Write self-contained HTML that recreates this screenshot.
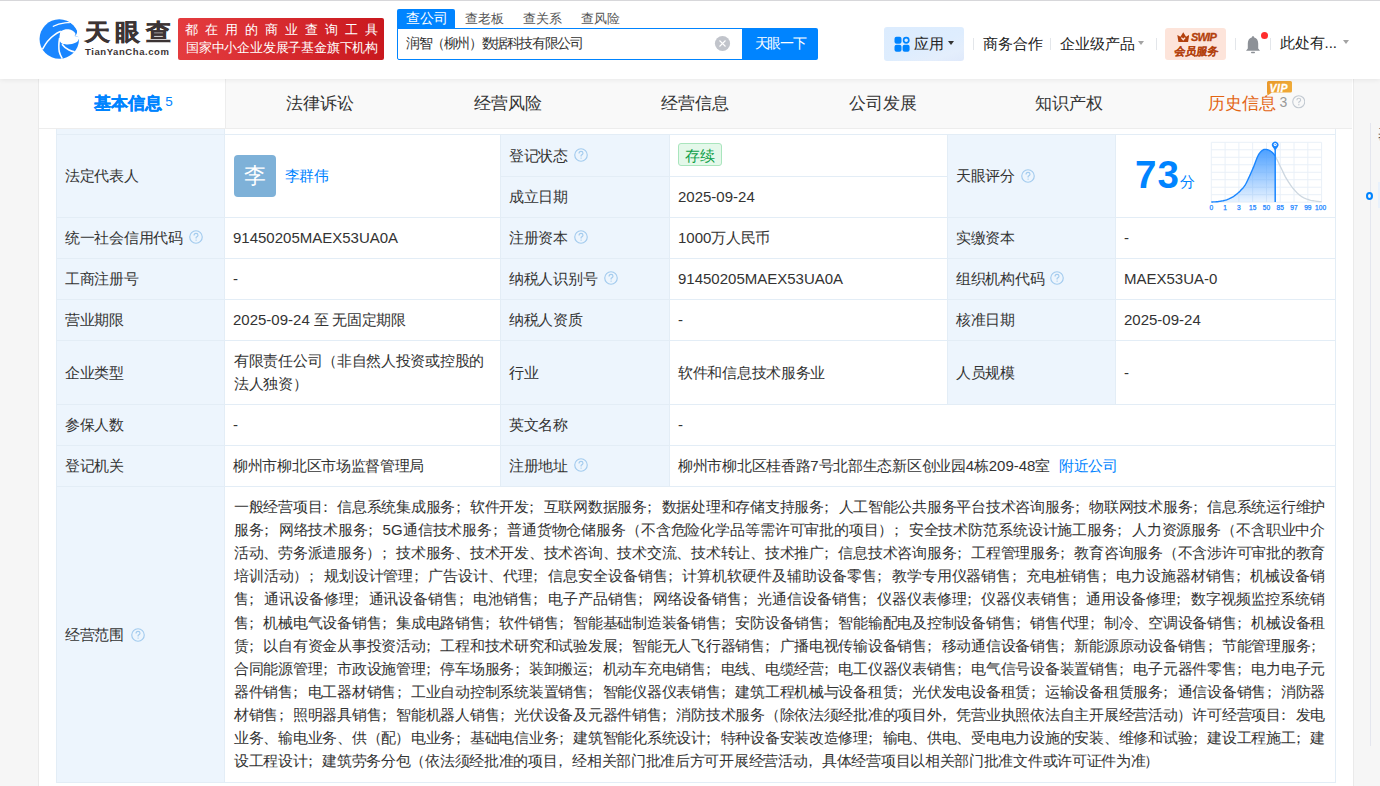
<!DOCTYPE html>
<html><head><meta charset="utf-8">
<style>
*{box-sizing:border-box;margin:0;padding:0}
html,body{width:1380px;height:786px;overflow:hidden;background:#f6f6f6;font-family:"Liberation Sans",sans-serif;color:#333;}
.a{position:absolute;white-space:nowrap}
#hdr{position:absolute;left:0;top:0;width:1380px;height:79px;background:#fff;border-top:1px solid #d7d7da;box-shadow:0 1px 5px rgba(0,0,0,0.07)}
.sep{position:absolute;width:1px;height:12px;background:#e3e6ea;top:37px}
.car{position:absolute;width:0;height:0;border-left:4px solid transparent;border-right:4px solid transparent;border-top:5px solid #333}
.q{position:absolute;width:13px;height:13px;border:1px solid #a9c9e9;border-radius:50%;color:#a9c9e9;font-size:9px;line-height:11px;text-align:center;font-weight:bold}
#panel{position:absolute;left:38px;top:79px;width:1315px;height:707px;background:#fff;border-left:1px solid #e8e8e8;border-right:1px solid #e8e8e8}
#tabs{position:absolute;left:39px;top:79px;width:1313px;height:50px;background:#f9f9f9;border-bottom:1px solid #eeeeee}
.tab{position:absolute;top:0;height:49px;font-size:17px;line-height:49px;color:#333;text-align:center}
.c{position:absolute;background:#fff}
.lb{background:#eef5fc}
.t{position:absolute;font-size:15px;letter-spacing:-0.3px;line-height:20px;color:#333;white-space:nowrap}
.scope div{white-space:nowrap;text-align:justify;text-align-last:justify;height:23px;line-height:23px}
.l{letter-spacing:0}
.pl{position:relative;left:-4.5px}
.pr{position:relative;left:-1px}
</style></head><body>
<div class="a" style="left:38px;top:79px;width:1316px;height:707px;background:#fff;border-left:1px solid #eaeaea;border-right:1px solid #eaeaea"></div>
<div class="a" style="left:56px;top:128px;width:168px;height:654px;background:#edf5fd"></div>
<div class="a" style="left:500px;top:134px;width:169px;height:352px;background:#edf5fd"></div>
<div class="a" style="left:947px;top:134px;width:168px;height:270px;background:#edf5fd"></div>
<div class="a" style="left:56px;top:134px;width:1280px;height:1px;background:#e3edf6"></div>
<div class="a" style="left:56px;top:217px;width:1280px;height:1px;background:#e3edf6"></div>
<div class="a" style="left:56px;top:258px;width:1280px;height:1px;background:#e3edf6"></div>
<div class="a" style="left:56px;top:299px;width:1280px;height:1px;background:#e3edf6"></div>
<div class="a" style="left:56px;top:340px;width:1280px;height:1px;background:#e3edf6"></div>
<div class="a" style="left:56px;top:404px;width:1280px;height:1px;background:#e3edf6"></div>
<div class="a" style="left:56px;top:445px;width:1280px;height:1px;background:#e3edf6"></div>
<div class="a" style="left:56px;top:486px;width:1280px;height:1px;background:#e3edf6"></div>
<div class="a" style="left:56px;top:782px;width:1280px;height:1px;background:#e3edf6"></div>
<div class="a" style="left:500px;top:176px;width:448px;height:1px;background:#e3edf6"></div>
<div class="a" style="left:56px;top:128px;width:1px;height:655px;background:#e3edf6"></div>
<div class="a" style="left:1335px;top:128px;width:1px;height:655px;background:#e3edf6"></div>
<div class="a" style="left:224px;top:128px;width:1px;height:655px;background:#e3edf6"></div>
<div class="a" style="left:500px;top:134px;width:1px;height:353px;background:#e3edf6"></div>
<div class="a" style="left:669px;top:134px;width:1px;height:353px;background:#e3edf6"></div>
<div class="a" style="left:947px;top:134px;width:1px;height:271px;background:#e3edf6"></div>
<div class="a" style="left:1115px;top:134px;width:1px;height:271px;background:#e3edf6"></div>
<div class="t" style="left:65px;top:166.0px;">法定代表人</div>
<div class="a" style="left:234px;top:155px;width:42px;height:42px;border-radius:4px;background:#7eb1d8;color:#fff;font-size:22px;line-height:42px;text-align:center">李</div>
<div class="t" style="left:284.6px;top:165.6px;color:#0084ff">李群伟</div>
<div class="t" style="left:509px;top:145.5px;">登记状态</div>
<svg class="a" style="left:574.0px;top:147.9px" width="14" height="14" viewBox="0 0 14 14"><circle cx="7" cy="7" r="6.25" fill="none" stroke="#a3cbee" stroke-width="1.15"/><path d="M5.05 5.4 C5.05 4.1 6 3.4 7.05 3.4 C8.2 3.4 9 4.15 9 5.2 C9 6.45 7.45 6.7 7.1 7.55 L7.1 8.5" fill="none" stroke="#a3cbee" stroke-width="1.15"/><circle cx="7.1" cy="10.1" r="0.7" fill="#a3cbee"/></svg>
<div class="a" style="left:678px;top:143px;width:44px;height:23px;border:1px solid #a9e5bd;border-radius:3px;background:#e4f8ea;color:#0d9e47;font-size:15px;line-height:24px;text-align:center;letter-spacing:-0.5px;text-indent:-0.5px">存续</div>
<div class="t" style="left:509px;top:187.0px;">成立日期</div>
<div class="t" style="left:678px;top:187.0px;"><span class="l">2025-09-24</span></div>
<div class="t" style="left:956px;top:166.0px;">天眼评分</div>
<svg class="a" style="left:1020.8px;top:168.8px" width="14" height="14" viewBox="0 0 14 14"><circle cx="7" cy="7" r="6.25" fill="none" stroke="#a3cbee" stroke-width="1.15"/><path d="M5.05 5.4 C5.05 4.1 6 3.4 7.05 3.4 C8.2 3.4 9 4.15 9 5.2 C9 6.45 7.45 6.7 7.1 7.55 L7.1 8.5" fill="none" stroke="#a3cbee" stroke-width="1.15"/><circle cx="7.1" cy="10.1" r="0.7" fill="#a3cbee"/></svg>
<div class="a" id="s73" style="left:1135px;top:152.5px;font-size:38.5px;line-height:44px;font-weight:bold;color:#0084ff;letter-spacing:1.2px">73</div>
<div class="a" id="sfen" style="left:1180px;top:172px;font-size:15px;line-height:20px;color:#0084ff">分</div>
<svg class="a" style="left:1205px;top:138px" width="125" height="78" viewBox="1205 138 125 78"><defs><linearGradient id="cg" x1="0" y1="0" x2="0" y2="1"><stop offset="0" stop-color="#4da0ff"/><stop offset="1" stop-color="#4da0ff" stop-opacity="0.12"/></linearGradient></defs><line x1="1211.3" y1="142.3" x2="1211.3" y2="202.2" stroke="#e9f0f8" stroke-width="1"/><line x1="1225.0874999999999" y1="142.3" x2="1225.0874999999999" y2="202.2" stroke="#e9f0f8" stroke-width="1"/><line x1="1238.875" y1="142.3" x2="1238.875" y2="202.2" stroke="#e9f0f8" stroke-width="1"/><line x1="1252.6625" y1="142.3" x2="1252.6625" y2="202.2" stroke="#e9f0f8" stroke-width="1"/><line x1="1266.4499999999998" y1="142.3" x2="1266.4499999999998" y2="202.2" stroke="#e9f0f8" stroke-width="1"/><line x1="1280.2375" y1="142.3" x2="1280.2375" y2="202.2" stroke="#e9f0f8" stroke-width="1"/><line x1="1294.0249999999999" y1="142.3" x2="1294.0249999999999" y2="202.2" stroke="#e9f0f8" stroke-width="1"/><line x1="1307.8125" y1="142.3" x2="1307.8125" y2="202.2" stroke="#e9f0f8" stroke-width="1"/><line x1="1321.6" y1="142.3" x2="1321.6" y2="202.2" stroke="#e9f0f8" stroke-width="1"/><line x1="1211.3" y1="142.3" x2="1321.6" y2="142.3" stroke="#e9f0f8" stroke-width="1"/><line x1="1211.3" y1="149.78750000000002" x2="1321.6" y2="149.78750000000002" stroke="#e9f0f8" stroke-width="1"/><line x1="1211.3" y1="157.275" x2="1321.6" y2="157.275" stroke="#e9f0f8" stroke-width="1"/><line x1="1211.3" y1="164.7625" x2="1321.6" y2="164.7625" stroke="#e9f0f8" stroke-width="1"/><line x1="1211.3" y1="172.25" x2="1321.6" y2="172.25" stroke="#e9f0f8" stroke-width="1"/><line x1="1211.3" y1="179.7375" x2="1321.6" y2="179.7375" stroke="#e9f0f8" stroke-width="1"/><line x1="1211.3" y1="187.225" x2="1321.6" y2="187.225" stroke="#e9f0f8" stroke-width="1"/><line x1="1211.3" y1="194.71249999999998" x2="1321.6" y2="194.71249999999998" stroke="#e9f0f8" stroke-width="1"/><line x1="1211.3" y1="202.2" x2="1321.6" y2="202.2" stroke="#e9f0f8" stroke-width="1"/><path d="M1211.30 202.00 L1211.70 201.98 L1212.20 201.96 L1212.80 201.94 L1213.46 201.92 L1214.19 201.89 L1214.95 201.85 L1215.73 201.81 L1216.51 201.75 L1217.27 201.68 L1218.00 201.60 L1218.72 201.50 L1219.46 201.40 L1220.23 201.28 L1221.00 201.16 L1221.77 201.02 L1222.54 200.87 L1223.29 200.72 L1224.02 200.55 L1224.73 200.38 L1225.40 200.20 L1226.04 200.01 L1226.65 199.81 L1227.25 199.60 L1227.82 199.37 L1228.38 199.14 L1228.93 198.91 L1229.46 198.66 L1229.98 198.41 L1230.49 198.16 L1231.00 197.90 L1231.49 197.64 L1231.96 197.38 L1232.42 197.12 L1232.86 196.86 L1233.29 196.58 L1233.72 196.30 L1234.15 196.00 L1234.59 195.69 L1235.03 195.35 L1235.50 195.00 L1235.98 194.63 L1236.46 194.25 L1236.96 193.86 L1237.45 193.45 L1237.96 193.03 L1238.46 192.59 L1238.97 192.13 L1239.48 191.64 L1239.99 191.14 L1240.50 190.60 L1241.00 190.07 L1241.50 189.56 L1241.99 189.05 L1242.47 188.53 L1242.97 187.97 L1243.47 187.36 L1243.99 186.68 L1244.54 185.91 L1245.10 185.02 L1245.70 184.00 L1246.34 182.82 L1247.03 181.47 L1247.75 180.00 L1248.50 178.42 L1249.26 176.79 L1250.01 175.12 L1250.76 173.45 L1251.48 171.82 L1252.16 170.26 L1252.80 168.80 L1253.40 167.39 L1253.96 165.97 L1254.51 164.55 L1255.03 163.15 L1255.54 161.79 L1256.03 160.47 L1256.51 159.22 L1256.98 158.05 L1257.44 156.97 L1257.90 156.00 L1258.35 155.14 L1258.78 154.38 L1259.20 153.70 L1259.61 153.11 L1260.01 152.57 L1260.41 152.10 L1260.80 151.68 L1261.20 151.29 L1261.59 150.94 L1262.00 150.60 L1262.41 150.29 L1262.80 150.04 L1263.20 149.82 L1263.59 149.65 L1263.99 149.52 L1264.39 149.43 L1264.80 149.38 L1265.22 149.36 L1265.65 149.36 L1266.10 149.40 L1266.57 149.47 L1267.07 149.58 L1267.59 149.73 L1268.12 149.92 L1268.66 150.14 L1269.19 150.38 L1269.72 150.66 L1270.23 150.95 L1270.73 151.27 L1271.20 151.60 L1271.64 151.93 L1272.04 152.24 L1272.41 152.56 L1272.78 152.90 L1273.14 153.27 L1273.50 153.70 L1273.88 154.19 L1274.28 154.76 L1274.72 155.42 L1275.20 156.20 L1275.20 156.20 L1275.2 202.0 L1211.3 202.0 Z" fill="url(#cg)"/><path d="M1275.20 156.20 L1275.73 157.12 L1276.30 158.19 L1276.91 159.36 L1277.54 160.63 L1278.18 161.95 L1278.83 163.30 L1279.48 164.65 L1280.11 165.97 L1280.72 167.23 L1281.30 168.40 L1281.84 169.50 L1282.35 170.56 L1282.84 171.60 L1283.31 172.61 L1283.78 173.61 L1284.26 174.60 L1284.75 175.59 L1285.26 176.58 L1285.81 177.58 L1286.40 178.60 L1287.03 179.64 L1287.69 180.71 L1288.38 181.79 L1289.09 182.88 L1289.81 183.96 L1290.55 185.03 L1291.31 186.08 L1292.07 187.10 L1292.83 188.07 L1293.60 189.00 L1294.37 189.89 L1295.14 190.76 L1295.93 191.61 L1296.72 192.43 L1297.52 193.22 L1298.33 193.98 L1299.15 194.69 L1299.99 195.37 L1300.84 196.01 L1301.70 196.60 L1302.58 197.14 L1303.46 197.62 L1304.36 198.07 L1305.27 198.47 L1306.19 198.83 L1307.13 199.17 L1308.08 199.47 L1309.04 199.76 L1310.01 200.04 L1311.00 200.30 L1312.06 200.55 L1313.21 200.76 L1314.42 200.96 L1315.66 201.13 L1316.88 201.28 L1318.06 201.41 L1319.16 201.53 L1320.14 201.63 L1320.96 201.72 L1321.60 201.80" fill="none" stroke="#cdd7e0" stroke-width="1.3"/><path d="M1211.30 202.00 L1211.70 201.98 L1212.20 201.96 L1212.80 201.94 L1213.46 201.92 L1214.19 201.89 L1214.95 201.85 L1215.73 201.81 L1216.51 201.75 L1217.27 201.68 L1218.00 201.60 L1218.72 201.50 L1219.46 201.40 L1220.23 201.28 L1221.00 201.16 L1221.77 201.02 L1222.54 200.87 L1223.29 200.72 L1224.02 200.55 L1224.73 200.38 L1225.40 200.20 L1226.04 200.01 L1226.65 199.81 L1227.25 199.60 L1227.82 199.37 L1228.38 199.14 L1228.93 198.91 L1229.46 198.66 L1229.98 198.41 L1230.49 198.16 L1231.00 197.90 L1231.49 197.64 L1231.96 197.38 L1232.42 197.12 L1232.86 196.86 L1233.29 196.58 L1233.72 196.30 L1234.15 196.00 L1234.59 195.69 L1235.03 195.35 L1235.50 195.00 L1235.98 194.63 L1236.46 194.25 L1236.96 193.86 L1237.45 193.45 L1237.96 193.03 L1238.46 192.59 L1238.97 192.13 L1239.48 191.64 L1239.99 191.14 L1240.50 190.60 L1241.00 190.07 L1241.50 189.56 L1241.99 189.05 L1242.47 188.53 L1242.97 187.97 L1243.47 187.36 L1243.99 186.68 L1244.54 185.91 L1245.10 185.02 L1245.70 184.00 L1246.34 182.82 L1247.03 181.47 L1247.75 180.00 L1248.50 178.42 L1249.26 176.79 L1250.01 175.12 L1250.76 173.45 L1251.48 171.82 L1252.16 170.26 L1252.80 168.80 L1253.40 167.39 L1253.96 165.97 L1254.51 164.55 L1255.03 163.15 L1255.54 161.79 L1256.03 160.47 L1256.51 159.22 L1256.98 158.05 L1257.44 156.97 L1257.90 156.00 L1258.35 155.14 L1258.78 154.38 L1259.20 153.70 L1259.61 153.11 L1260.01 152.57 L1260.41 152.10 L1260.80 151.68 L1261.20 151.29 L1261.59 150.94 L1262.00 150.60 L1262.41 150.29 L1262.80 150.04 L1263.20 149.82 L1263.59 149.65 L1263.99 149.52 L1264.39 149.43 L1264.80 149.38 L1265.22 149.36 L1265.65 149.36 L1266.10 149.40 L1266.57 149.47 L1267.07 149.58 L1267.59 149.73 L1268.12 149.92 L1268.66 150.14 L1269.19 150.38 L1269.72 150.66 L1270.23 150.95 L1270.73 151.27 L1271.20 151.60 L1271.64 151.93 L1272.04 152.24 L1272.41 152.56 L1272.78 152.90 L1273.14 153.27 L1273.50 153.70 L1273.88 154.19 L1274.28 154.76 L1274.72 155.42 L1275.20 156.20 L1275.20 156.20" fill="none" stroke="#1a86ff" stroke-width="1.4"/><line x1="1275.2" y1="146" x2="1275.2" y2="202.0" stroke="#1a86ff" stroke-width="1.5"/><path d="M1275.2 150.5 L1272.6000000000001 147 A3.3 3.3 0 1 1 1277.8 147 Z" fill="#1a86ff"/><circle cx="1275.2" cy="144.6" r="1.6" fill="#fff"/><circle cx="1275.2" cy="144.6" r="0.7" fill="#1a86ff"/><text x="1211.3" y="210.3" font-size="6.6" fill="#1a86ff" text-anchor="middle" font-family="Liberation Sans" stroke="#1a86ff" stroke-width="0.25">0</text><text x="1225.0874999999999" y="210.3" font-size="6.6" fill="#1a86ff" text-anchor="middle" font-family="Liberation Sans" stroke="#1a86ff" stroke-width="0.25">1</text><text x="1238.875" y="210.3" font-size="6.6" fill="#1a86ff" text-anchor="middle" font-family="Liberation Sans" stroke="#1a86ff" stroke-width="0.25">3</text><text x="1252.6625" y="210.3" font-size="6.6" fill="#1a86ff" text-anchor="middle" font-family="Liberation Sans" stroke="#1a86ff" stroke-width="0.25">15</text><text x="1266.4499999999998" y="210.3" font-size="6.6" fill="#1a86ff" text-anchor="middle" font-family="Liberation Sans" stroke="#1a86ff" stroke-width="0.25">50</text><text x="1280.2375" y="210.3" font-size="6.6" fill="#1a86ff" text-anchor="middle" font-family="Liberation Sans" stroke="#1a86ff" stroke-width="0.25">85</text><text x="1294.0249999999999" y="210.3" font-size="6.6" fill="#1a86ff" text-anchor="middle" font-family="Liberation Sans" stroke="#1a86ff" stroke-width="0.25">97</text><text x="1307.8125" y="210.3" font-size="6.6" fill="#1a86ff" text-anchor="middle" font-family="Liberation Sans" stroke="#1a86ff" stroke-width="0.25">99</text><text x="1320.6" y="210.3" font-size="6.6" fill="#1a86ff" text-anchor="middle" font-family="Liberation Sans" stroke="#1a86ff" stroke-width="0.25">100</text></svg>
<div class="t" style="left:65px;top:228.0px;">统一社会信用代码</div>
<svg class="a" style="left:189.0px;top:230.4px" width="14" height="14" viewBox="0 0 14 14"><circle cx="7" cy="7" r="6.25" fill="none" stroke="#a3cbee" stroke-width="1.15"/><path d="M5.05 5.4 C5.05 4.1 6 3.4 7.05 3.4 C8.2 3.4 9 4.15 9 5.2 C9 6.45 7.45 6.7 7.1 7.55 L7.1 8.5" fill="none" stroke="#a3cbee" stroke-width="1.15"/><circle cx="7.1" cy="10.1" r="0.7" fill="#a3cbee"/></svg>
<div class="t" style="left:233px;top:228.0px;"><span class="l">91450205MAEX53UA0A</span></div>
<div class="t" style="left:509px;top:228.0px;">注册资本</div>
<svg class="a" style="left:574.0px;top:230.4px" width="14" height="14" viewBox="0 0 14 14"><circle cx="7" cy="7" r="6.25" fill="none" stroke="#a3cbee" stroke-width="1.15"/><path d="M5.05 5.4 C5.05 4.1 6 3.4 7.05 3.4 C8.2 3.4 9 4.15 9 5.2 C9 6.45 7.45 6.7 7.1 7.55 L7.1 8.5" fill="none" stroke="#a3cbee" stroke-width="1.15"/><circle cx="7.1" cy="10.1" r="0.7" fill="#a3cbee"/></svg>
<div class="t" style="left:678px;top:228.0px;"><span class="l">1000</span>万人民币</div>
<div class="t" style="left:956px;top:228.0px;">实缴资本</div>
<div class="t" style="left:1124px;top:228.0px;"><span class="l">-</span></div>
<div class="t" style="left:65px;top:269.0px;">工商注册号</div>
<div class="t" style="left:233px;top:269.0px;"><span class="l">-</span></div>
<div class="t" style="left:509px;top:269.0px;">纳税人识别号</div>
<svg class="a" style="left:604.0px;top:271.4px" width="14" height="14" viewBox="0 0 14 14"><circle cx="7" cy="7" r="6.25" fill="none" stroke="#a3cbee" stroke-width="1.15"/><path d="M5.05 5.4 C5.05 4.1 6 3.4 7.05 3.4 C8.2 3.4 9 4.15 9 5.2 C9 6.45 7.45 6.7 7.1 7.55 L7.1 8.5" fill="none" stroke="#a3cbee" stroke-width="1.15"/><circle cx="7.1" cy="10.1" r="0.7" fill="#a3cbee"/></svg>
<div class="t" style="left:678px;top:269.0px;"><span class="l">91450205MAEX53UA0A</span></div>
<div class="t" style="left:956px;top:269.0px;">组织机构代码</div>
<svg class="a" style="left:1050.0px;top:271.4px" width="14" height="14" viewBox="0 0 14 14"><circle cx="7" cy="7" r="6.25" fill="none" stroke="#a3cbee" stroke-width="1.15"/><path d="M5.05 5.4 C5.05 4.1 6 3.4 7.05 3.4 C8.2 3.4 9 4.15 9 5.2 C9 6.45 7.45 6.7 7.1 7.55 L7.1 8.5" fill="none" stroke="#a3cbee" stroke-width="1.15"/><circle cx="7.1" cy="10.1" r="0.7" fill="#a3cbee"/></svg>
<div class="t" style="left:1124px;top:269.0px;"><span class="l">MAEX53UA-0</span></div>
<div class="t" style="left:65px;top:310.0px;">营业期限</div>
<div class="t" style="left:233px;top:310.0px;"><span class="l">2025-09-24</span> 至 无固定期限</div>
<div class="t" style="left:509px;top:310.0px;">纳税人资质</div>
<div class="t" style="left:678px;top:310.0px;"><span class="l">-</span></div>
<div class="t" style="left:956px;top:310.0px;">核准日期</div>
<div class="t" style="left:1124px;top:310.0px;"><span class="l">2025-09-24</span></div>
<div class="t" style="left:65px;top:362.5px;">企业类型</div>
<div class="t" style="left:509px;top:362.5px;">行业</div>
<div class="t" style="left:678px;top:362.5px;">软件和信息技术服务业</div>
<div class="t" style="left:956px;top:362.5px;">人员规模</div>
<div class="t" style="left:1124px;top:362.5px;"><span class="l">-</span></div>
<div class="t" style="left:65px;top:415.0px;">参保人数</div>
<div class="t" style="left:233px;top:415.0px;"><span class="l">-</span></div>
<div class="t" style="left:509px;top:415.0px;">英文名称</div>
<div class="t" style="left:678px;top:415.0px;"><span class="l">-</span></div>
<div class="t" style="left:65px;top:456.0px;">登记机关</div>
<div class="t" style="left:233px;top:456.0px;">柳州市柳北区市场监督管理局</div>
<div class="t" style="left:509px;top:456.0px;">注册地址</div>
<svg class="a" style="left:574.0px;top:458.4px" width="14" height="14" viewBox="0 0 14 14"><circle cx="7" cy="7" r="6.25" fill="none" stroke="#a3cbee" stroke-width="1.15"/><path d="M5.05 5.4 C5.05 4.1 6 3.4 7.05 3.4 C8.2 3.4 9 4.15 9 5.2 C9 6.45 7.45 6.7 7.1 7.55 L7.1 8.5" fill="none" stroke="#a3cbee" stroke-width="1.15"/><circle cx="7.1" cy="10.1" r="0.7" fill="#a3cbee"/></svg>
<div class="t" style="left:678px;top:456.0px;">柳州市柳北区桂香路<span class="l">7</span>号北部生态新区创业园<span class="l">4</span>栋<span class="l">209-48</span>室</div>
<div class="t" style="left:234px;top:349px;line-height:23px">有限责任公司（非自然人投资或控股的<br>法人独资）</div>
<div class="t" id="fjgs" style="left:1059px;top:455.5px;color:#0084ff">附近公司</div>
<div class="t" style="left:65px;top:624.5px;">经营范围</div>
<svg class="a" style="left:130.8px;top:627.6px" width="14" height="14" viewBox="0 0 14 14"><circle cx="7" cy="7" r="6.25" fill="none" stroke="#a3cbee" stroke-width="1.15"/><path d="M5.05 5.4 C5.05 4.1 6 3.4 7.05 3.4 C8.2 3.4 9 4.15 9 5.2 C9 6.45 7.45 6.7 7.1 7.55 L7.1 8.5" fill="none" stroke="#a3cbee" stroke-width="1.15"/><circle cx="7.1" cy="10.1" r="0.7" fill="#a3cbee"/></svg>
<div class="a scope" style="left:234px;top:495.2px;width:1091px;font-size:15px;letter-spacing:-0.3px;color:#333"><div style="height:23.07px;line-height:23.07px;">一般经营项目<span class="pl">：</span>信息系统集成服务<span class="pl">；</span>软件开发<span class="pl">；</span>互联网数据服务<span class="pl">；</span>数据处理和存储支持服务<span class="pl">；</span>人工智能公共服务平台技术咨询服务<span class="pl">；</span>物联网技术服务<span class="pl">；</span>信息系统运行维护</div><div style="height:23.07px;line-height:23.07px;">服务<span class="pl">；</span>网络技术服务<span class="pl">；</span><span class="l">5G</span>通信技术服务<span class="pl">；</span>普通货物仓储服务（不含危险化学品等需许可审批的项目<span class="pr">）</span><span class="pl">；</span>安全技术防范系统设计施工服务<span class="pl">；</span>人力资源服务（不含职业中介</div><div style="height:23.07px;line-height:23.07px;">活动、劳务派遣服务<span class="pr">）</span><span class="pl">；</span>技术服务、技术开发、技术咨询、技术交流、技术转让、技术推广<span class="pl">；</span>信息技术咨询服务<span class="pl">；</span>工程管理服务<span class="pl">；</span>教育咨询服务（不含涉许可审批的教育</div><div style="height:23.07px;line-height:23.07px;">培训活动<span class="pr">）</span><span class="pl">；</span>规划设计管理<span class="pl">；</span>广告设计、代理<span class="pl">；</span>信息安全设备销售<span class="pl">；</span>计算机软硬件及辅助设备零售<span class="pl">；</span>教学专用仪器销售<span class="pl">；</span>充电桩销售<span class="pl">；</span>电力设施器材销售<span class="pl">；</span>机械设备销</div><div style="height:23.07px;line-height:23.07px;">售<span class="pl">；</span>通讯设备修理<span class="pl">；</span>通讯设备销售<span class="pl">；</span>电池销售<span class="pl">；</span>电子产品销售<span class="pl">；</span>网络设备销售<span class="pl">；</span>光通信设备销售<span class="pl">；</span>仪器仪表修理<span class="pl">；</span>仪器仪表销售<span class="pl">；</span>通用设备修理<span class="pl">；</span>数字视频监控系统销</div><div style="height:23.07px;line-height:23.07px;">售<span class="pl">；</span>机械电气设备销售<span class="pl">；</span>集成电路销售<span class="pl">；</span>软件销售<span class="pl">；</span>智能基础制造装备销售<span class="pl">；</span>安防设备销售<span class="pl">；</span>智能输配电及控制设备销售<span class="pl">；</span>销售代理<span class="pl">；</span>制冷、空调设备销售<span class="pl">；</span>机械设备租</div><div style="height:23.07px;line-height:23.07px;">赁<span class="pl">；</span>以自有资金从事投资活动<span class="pl">；</span>工程和技术研究和试验发展<span class="pl">；</span>智能无人飞行器销售<span class="pl">；</span>广播电视传输设备销售<span class="pl">；</span>移动通信设备销售<span class="pl">；</span>新能源原动设备销售<span class="pl">；</span>节能管理服务<span class="pl">；</span></div><div style="height:23.07px;line-height:23.07px;">合同能源管理<span class="pl">；</span>市政设施管理<span class="pl">；</span>停车场服务<span class="pl">；</span>装卸搬运<span class="pl">；</span>机动车充电销售<span class="pl">；</span>电线、电缆经营<span class="pl">；</span>电工仪器仪表销售<span class="pl">；</span>电气信号设备装置销售<span class="pl">；</span>电子元器件零售<span class="pl">；</span>电力电子元</div><div style="height:23.07px;line-height:23.07px;">器件销售<span class="pl">；</span>电工器材销售<span class="pl">；</span>工业自动控制系统装置销售<span class="pl">；</span>智能仪器仪表销售<span class="pl">；</span>建筑工程机械与设备租赁<span class="pl">；</span>光伏发电设备租赁<span class="pl">；</span>运输设备租赁服务<span class="pl">；</span>通信设备销售<span class="pl">；</span>消防器</div><div style="height:23.07px;line-height:23.07px;">材销售<span class="pl">；</span>照明器具销售<span class="pl">；</span>智能机器人销售<span class="pl">；</span>光伏设备及元器件销售<span class="pl">；</span>消防技术服务（除依法须经批准的项目外<span class="pl">，</span>凭营业执照依法自主开展经营活动<span class="pr">）</span>许可经营项目<span class="pl">：</span>发电</div><div style="height:23.07px;line-height:23.07px;">业务、输电业务、供（配<span class="pr">）</span>电业务<span class="pl">；</span>基础电信业务<span class="pl">；</span>建筑智能化系统设计<span class="pl">；</span>特种设备安装改造修理<span class="pl">；</span>输电、供电、受电电力设施的安装、维修和试验<span class="pl">；</span>建设工程施工<span class="pl">；</span>建</div><div style="height:23.07px;line-height:23.07px;text-align-last:left">设工程设计<span class="pl">；</span>建筑劳务分包（依法须经批准的项目<span class="pl">，</span>经相关部门批准后方可开展经营活动<span class="pl">，</span>具体经营项目以相关部门批准文件或许可证件为准<span class="pr">）</span></div></div>
<div class="a" style="left:39px;top:79px;width:1313px;height:50px;background:#f9f9f9;border-bottom:1px solid #ededed"></div>
<div class="a" style="left:39px;top:79px;width:187px;height:49px;background:#fff;border-right:1px solid #ededed"></div>
<div class="a" id="tab0" style="left:94px;top:94px;font-size:17px;line-height:20px;font-weight:bold;color:#0084ff;-webkit-text-stroke:0.35px #0084ff">基本信息</div>
<div class="a" id="tab0n" style="left:165.2px;top:94.2px;font-size:13.5px;line-height:16px;color:#0084ff">5</div>
<div class="a tabt" style="left:280.3571428571429px;width:80px;text-align:center;top:93.8px;font-size:17px;line-height:20px;color:#333">法律诉讼</div>
<div class="a tabt" style="left:467.92857142857144px;width:80px;text-align:center;top:93.8px;font-size:17px;line-height:20px;color:#333">经营风险</div>
<div class="a tabt" style="left:654.8px;width:80px;text-align:center;top:93.8px;font-size:17px;line-height:20px;color:#333">经营信息</div>
<div class="a tabt" style="left:842.5714285714287px;width:80px;text-align:center;top:93.8px;font-size:17px;line-height:20px;color:#333">公司发展</div>
<div class="a tabt" style="left:1029.142857142857px;width:80px;text-align:center;top:93.8px;font-size:17px;line-height:20px;color:#333">知识产权</div>
<div class="a" id="tab6" style="left:1208px;top:93.8px;font-size:17px;line-height:20px;color:#e36412">历史信息</div>
<div class="a" style="left:1279.5px;top:93.5px;font-size:14px;line-height:16px;color:#999">3</div>
<svg class="a" style="left:1291.55px;top:95.15px" width="13.5" height="13.5" viewBox="0 0 14 14"><circle cx="7" cy="7" r="6.25" fill="none" stroke="#c3cad2" stroke-width="1.15"/><path d="M5.05 5.4 C5.05 4.1 6 3.4 7.05 3.4 C8.2 3.4 9 4.15 9 5.2 C9 6.45 7.45 6.7 7.1 7.55 L7.1 8.5" fill="none" stroke="#c3cad2" stroke-width="1.15"/><circle cx="7.1" cy="10.1" r="0.7" fill="#c3cad2"/></svg>
<svg class="a" style="left:1266px;top:80px" width="27" height="16" viewBox="0 0 27 16"><defs><linearGradient id="vg" x1="0" x2="1"><stop offset="0" stop-color="#eb9a2a"/><stop offset="1" stop-color="#f0ab3a"/></linearGradient></defs><path d="M2.5 1 L24.5 1 Q26 1 26 2.5 L26 11 Q26 12.5 24.5 12.5 L6 12.5 L1.5 15.5 L1 12 L1 2.5 Q1 1 2.5 1 Z" fill="url(#vg)"/></svg>
<div class="a" style="left:1269.5px;top:81.5px;font-size:10.5px;line-height:12px;font-weight:bold;font-style:italic;color:#fff;letter-spacing:0.6px;-webkit-text-stroke:0.3px #fff">VIP</div>
<div class="a" style="left:1370px;top:123px;width:1px;height:623px;background:#e4e6ee"></div>
<div class="a" style="left:1366px;top:192px;width:7px;height:8px;border:2px solid #0084ff;border-radius:50%"></div>
<div class="a" style="left:1378px;top:182px;width:2px;height:26px;background:#e8f1fc"></div>
<div class="a" style="left:1377.5px;top:124px;font-size:15px;line-height:20px;color:#333">基</div>
<div id="hdr">
<svg class="a" style="left:37px;top:15px" width="44" height="44" viewBox="0 0 44 44">
<circle cx="22.3" cy="23.1" r="19.75" fill="#1a86ff"/>
<path d="M23.5 15.3 C26 13.6 29 13 31.6 13.2 C34.5 13.6 37.4 15.2 38.4 17.4 C38.6 18.4 38.2 19.3 37.5 19.9 L42.3 21.3 C42 23.8 40.8 25.6 39 26.6 C36.5 28 33 28.6 29.7 28.5 C27.6 28.4 26.2 28.1 25.4 27.8 C23.6 26.6 22.4 25 22.4 23.2 C22.5 20 22.9 17.2 23.5 15.3 Z" fill="#fff"/>
<path d="M5.4 33.4 C8.5 27.6 12.5 22.4 16.8 19.4 C19 17.6 21.5 16.2 23.8 15.3" stroke="#fff" stroke-width="1.45" fill="none"/>
<path d="M22.6 22 C21.7 27.5 21.5 31.5 22.3 35.8 C23 38.5 24 40.5 25.3 42.6" stroke="#fff" stroke-width="1.55" fill="none"/>
<path d="M25 28.2 C26.8 30.6 29.2 32.6 32 34 C33.8 34.9 35.6 35.5 37.6 35.9" stroke="#fff" stroke-width="1.6" fill="none"/>
<path d="M15.8 10.6 C19.5 8.4 24 7.1 28 6.8 C29.6 6.7 31.2 6.7 32.8 6.6" stroke="#fff" stroke-width="1.2" fill="none"/>
<path d="M32.6 6.4 C35.6 7.6 38.2 9.8 39.6 13 C40.4 15.2 40.3 17.6 38.8 19.2 L37.5 19.9 L42.6 21.3 L44 21.3 L44 0 L30 0 Z" fill="#fff"/>
</svg>
<div class="a" id="lgt" style="left:84.5px;top:16.5px;transform:scaleY(0.92);transform-origin:0 4px;font-size:25px;line-height:30px;font-weight:bold;color:#3c3434;letter-spacing:5.5px;-webkit-text-stroke:0.5px #3c3434">天眼查</div>
<div class="a" id="lgc" style="left:85px;top:46px;font-size:9.5px;line-height:10px;font-weight:bold;color:#3c3434;letter-spacing:0.58px">TianYanCha.com</div>
<div class="a" style="left:178px;top:17px;width:206px;height:42px;border-radius:2px;background:linear-gradient(90deg,#e43c3f,#c9181e)"></div>
<div class="a" id="rb1" style="left:185px;top:21px;font-size:13px;line-height:15px;color:#fff;letter-spacing:7px">都在用的商业查询工具</div>
<div class="a" id="rb2" style="left:186px;top:38.5px;font-size:13px;line-height:15px;color:#fff;letter-spacing:-0.2px">国家中小企业发展子基金旗下机构</div>
<div class="a" style="left:397px;top:8px;width:58px;height:20px;background:#0084ff;border-radius:2px 2px 0 0"></div>
<div class="a" id="tb1" style="left:406px;top:9px;font-size:13.5px;line-height:18px;color:#fff">查公司</div>
<div class="a" style="left:465px;top:9px;font-size:13px;line-height:18px;color:#555">查老板</div>
<div class="a" style="left:523px;top:9px;font-size:13px;line-height:18px;color:#555">查关系</div>
<div class="a" style="left:581px;top:9px;font-size:13px;line-height:18px;color:#555">查风险</div>
<div class="a" style="left:397px;top:27px;width:348px;height:32px;border:1px solid #0084ff;border-radius:0 0 0 2px;background:#fff"></div>
<div class="a" id="sq" style="left:406px;top:32px;font-size:14px;line-height:20px;color:#333;letter-spacing:-1.4px">润智（柳州）数据科技有限公司</div>
<svg class="a" style="left:714px;top:34px" width="17" height="17" viewBox="0 0 17 17"><circle cx="8.5" cy="8.5" r="7.6" fill="#c1c4cb"/><path d="M5.5 5.5 L11.5 11.5 M11.5 5.5 L5.5 11.5" stroke="#fff" stroke-width="1.1"/></svg>
<div class="a" style="left:742px;top:27px;width:76px;height:32px;background:#0084ff;border-radius:0 2px 2px 0"></div>
<div class="a" id="btn" style="left:754.5px;top:32px;font-size:14px;line-height:20px;color:#fff;letter-spacing:-1.15px">天眼一下</div>
<div class="a" style="left:884px;top:26px;width:80px;height:34px;border-radius:3px;background:linear-gradient(160deg,#dcecfe 0%,#deedfe 55%,#e4eefc 80%,#dfe9fb 100%)"></div>
<svg class="a" style="left:893.6px;top:35.4px" width="17" height="17" viewBox="0 0 17 17"><rect x="0.5" y="0.8" width="7" height="7" rx="2" fill="#0084ff"/><circle cx="12.2" cy="4.3" r="2.6" fill="none" stroke="#0084ff" stroke-width="1.7"/><rect x="0.5" y="8.8" width="7" height="7" rx="2" fill="#0084ff"/><rect x="8.6" y="8.8" width="7" height="7" rx="2" fill="#0084ff"/></svg>
<div class="a" id="app" style="left:914px;top:32.5px;font-size:15px;line-height:20px;color:#222">应用</div>
<div class="car" style="left:948px;top:40px;border-top-color:#333;border-left-width:3.6px;border-right-width:3.6px;border-top-width:4.2px"></div>
<div class="sep" style="left:973px"></div>
<div class="a" id="sw" style="left:982.5px;top:32.5px;font-size:15px;line-height:20px;color:#222">商务合作</div>
<div class="sep" style="left:1050px"></div>
<div class="a" id="qy" style="left:1059.5px;top:32.5px;font-size:15px;line-height:20px;color:#222">企业级产品</div>
<div class="car" style="left:1137.8px;top:40px;border-top-color:#a3a3a3;border-left-width:3.8px;border-right-width:3.8px;border-top-width:4.4px"></div>
<div class="sep" style="left:1156px"></div>
<div class="a" style="left:1165px;top:27px;width:61px;height:32px;border-radius:3px;background:#fde4da"></div>
<svg class="a" style="left:1176.5px;top:30.5px" width="12.5" height="10.5" viewBox="0 0 12 10"><path d="M0.3 2.8 L3.3 4.6 L6 0.3 L8.7 4.6 L11.7 2.8 L10.6 9.7 L1.4 9.7 Z" fill="#b3400c"/><path d="M4.2 5.4 L6 7.4 L7.8 5.4" stroke="#fde4da" stroke-width="1.3" fill="none"/></svg>
<div class="a" id="swip" style="left:1191px;top:29.5px;font-size:11px;line-height:12px;color:#b3400c;font-weight:bold;font-style:italic;-webkit-text-stroke:0.3px #b3400c;letter-spacing:-0.8px">SWIP</div>
<div class="a" id="hyf" style="left:1174px;top:43.5px;font-size:11px;line-height:13px;color:#b3400c;font-weight:bold;-webkit-text-stroke:0.1px #b3400c;transform:skewX(-8deg)">会员服务</div>
<div class="sep" style="left:1235px"></div>
<svg class="a" style="left:1245px;top:33.6px" width="16" height="19" viewBox="0 0 16 19"><path d="M8 1.2 C8.8 1.2 9.2 1.8 9.2 2.4 C11.8 3.1 13.2 5.3 13.2 8.5 L13.2 13.5 L15 15.8 L1 15.8 L2.8 13.5 L2.8 8.5 C2.8 5.3 4.2 3.1 6.8 2.4 C6.8 1.8 7.2 1.2 8 1.2 Z" fill="#8d9197"/><rect x="6" y="16.8" width="4" height="1.4" rx="0.7" fill="#8d9197"/></svg>
<div class="a" style="left:1261px;top:31px;width:7px;height:7px;border-radius:50%;background:#ff2d2d"></div>
<div class="sep" style="left:1270px"></div>
<div class="a" id="ccy" style="left:1279.5px;top:31.5px;font-size:15px;line-height:20px;color:#222">此处有...</div>
<div class="car" style="left:1343.2px;top:38.6px;border-top-color:#a3a3a3;border-left-width:3.8px;border-right-width:3.8px;border-top-width:4.6px"></div>
</div>
</body></html>
